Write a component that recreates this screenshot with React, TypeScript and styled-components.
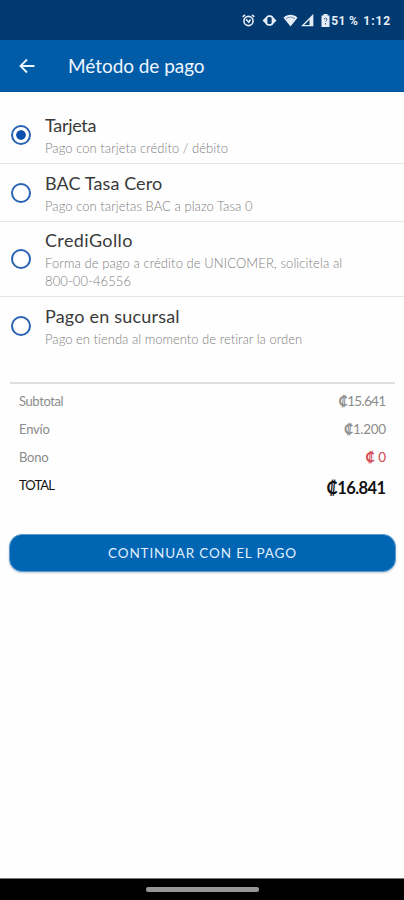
import React, { useState } from "react";
import styled, { createGlobalStyle } from "styled-components";

const GlobalStyle = createGlobalStyle`
  * { box-sizing: border-box; }
  body { margin: 0; background: #fff; }
  button, p, h1, dl, dt, dd { margin: 0; padding: 0; font: inherit; }
`;

const Screen = styled.div`
  display: flex;
  flex-direction: column;
  width: 404px;
  height: 900px;
  overflow: hidden;
  background: #fefefe;
  font-family: Lato, "Open Sans", sans-serif;
`;

const StatusBar = styled.div`
  display: flex;
  align-items: center;
  justify-content: flex-end;
  height: 40px;
  flex: none;
  padding: 1px 13px 0 0;
  background: #003a70;
  color: #e6edf7;
  font: 700 12px/16px Roboto, sans-serif;
  svg { display: block; flex: none; }
`;

const StatusIcon = styled.svg<{ $gap: number }>`
  margin-right: ${(p) => p.$gap}px;
`;

const StatusText = styled.span<{ $spacing: number; $gap?: number }>`
  white-space: nowrap;
  letter-spacing: ${(p) => p.$spacing}px;
  margin-right: ${(p) => p.$gap ?? 0}px;
`;

const Header = styled.header`
  display: flex;
  align-items: center;
  flex: none;
  height: 52px;
  padding-left: 19px;
  background: #005ca7;
  border-bottom: 1px solid #004f9b;
  color: #eff6ff;
`;

const BackButton = styled.button`
  display: flex;
  width: 49px;
  border: 0;
  background: none;
  color: inherit;
`;

const Title = styled.h1`
  font-size: 19px;
  line-height: 24px;
  font-weight: 400;
  letter-spacing: -0.05px;
  white-space: nowrap;
`;

const Options = styled.div`
  padding-top: 14px;
  flex: none;
`;

const Option = styled.div`
  display: flex;
  align-items: center;
  min-height: 58px;
  padding: 6px 30px 6px 11px;
  border-bottom: 1px solid #e6e6e6;
  cursor: pointer;
  &:last-child { border-bottom-color: transparent; }
`;

const Radio = styled.span<{ $checked: boolean }>`
  flex: none;
  width: 20px;
  height: 20px;
  margin-right: 14px;
  border: 2px solid #2a62b4;
  border-radius: 50%;
  background: ${(p) => (p.$checked ? "radial-gradient(circle, #0b50ae 4.4px, #fff 5.2px)" : "#fff")};
`;

const OptionName = styled.p<{ $spacing: number }>`
  font-size: 18px;
  line-height: 24px;
  color: #3a3a3a;
  letter-spacing: ${(p) => p.$spacing}px;
`;

const OptionDetail = styled.p<{ $spacing: number }>`
  margin-top: 2px;
  font-size: 13px;
  font-weight: 300;
  line-height: 18px;
  color: #808080;
  white-space: pre-line;
  letter-spacing: ${(p) => p.$spacing}px;
`;

const Summary = styled.dl`
  flex: none;
  margin: 27px 9px 0 10px;
  padding: 3px 9px 1px;
  border-top: 2px solid #dce0e1;
`;

const Line = styled.div<{ $tone?: "discount" | "total" }>`
  display: flex;
  justify-content: space-between;
  align-items: center;
  height: 28px;
  color: ${(p) => (p.$tone === "total" ? "#111" : "#8c8c8c")};
  dt {
    font-size: 13px;
  }
  dd {
    font-size: ${(p) => (p.$tone === "total" ? 16.5 : 13.5)}px;
    font-weight: ${(p) => (p.$tone === "total" ? 700 : 400)};
    color: ${(p) => (p.$tone === "discount" ? "#cf4650" : "inherit")};
    padding-top: ${(p) => (p.$tone === "total" ? 6 : 0)}px;
  }
`;

const LineText = styled.span<{ $spacing: number }>`
  display: block;
  letter-spacing: ${(p) => p.$spacing}px;
  margin-right: ${(p) => -p.$spacing}px;
`;

const Colon = styled.span`
  font-weight: 700;
`;

const PayButton = styled.button`
  flex: none;
  height: 38px;
  margin: 34px 8px 0 9px !important;
  border: 1px solid #5b9bd2;
  border-radius: 13px;
  background: #0065b3;
  color: #e3efff;
  font-size: 13.5px !important;
  letter-spacing: 0.85px;
  box-shadow: 0 1px 2px rgba(0, 50, 100, 0.25);
`;

const NavBar = styled.div`
  display: flex;
  justify-content: center;
  flex: none;
  height: 22px;
  margin-top: auto;
  padding-top: 8px;
  background: #000;
  border-top: 1px solid #777;
`;

const NavHandle = styled.span`
  width: 113px;
  height: 5px;
  border-radius: 2px;
  background: #969696;
`;

const options = [
  { name: "Tarjeta", detail: "Pago con tarjeta crédito / débito", ns: -0.3, ds: 0.05 },
  { name: "BAC Tasa Cero", detail: "Pago con tarjetas BAC a plazo Tasa 0", ns: 0.1, ds: 0.05 },
  { name: "CrediGollo", detail: "Forma de pago a crédito de UNICOMER, solicitela al\n800-00-46556", ns: 0.4, ds: 0.09 },
  { name: "Pago en sucursal", detail: "Pago en tienda al momento de retirar la orden", ns: 0.2, ds: 0.02 },
];

const lines: { label: string; amount: string; ls: number; as: number; tone?: "discount" | "total" }[] = [
  { label: "Subtotal", amount: "15.641", ls: -0.4, as: -0.7 },
  { label: "Envío", amount: "1.200", ls: -0.2, as: -0.35 },
  { label: "Bono", amount: " 0", ls: -0.2, as: 0, tone: "discount" },
  { label: "TOTAL", amount: "16.841", ls: -0.9, as: -0.6, tone: "total" },
];

export default function App() {
  const [selected, setSelected] = useState(0);
  return (
    <Screen>
      <GlobalStyle />
      <StatusBar>
        <StatusIcon $gap={7} width="13" height="13" viewBox="0 0 13 13" fill="none" stroke="currentColor" strokeWidth="1.6">
          <circle cx="6.5" cy="7" r="4.6" />
          <path d="M.7 2.9 3 .9M12.3 2.9 10 .9M4 5.200l2.800 3L8.500 5.500" />
        </StatusIcon>
        <StatusIcon $gap={6} width="15" height="13" viewBox="0 0 15 13">
          <path d="M.5 6.500 4 3v7zM14.500 6.500 11 3v7z" fill="currentColor" />
          <rect x="4.500" y="2.200" width="6" height="8.600" rx="2.400" fill="none" stroke="currentColor" strokeWidth="1.700" />
        </StatusIcon>
        <StatusIcon $gap={3} width="15" height="13" viewBox="0 0 15 13">
          <path d="M.5 3.7C4.5-.1 10.5-.1 14.500 3.700L7.500 12.500z" fill="currentColor" />
          <path d="M3 4.700c3-2 6-2 9 0" fill="none" stroke="#628ab2" />
        </StatusIcon>
        <StatusIcon $gap={7} width="13" height="13" viewBox="0 0 13 13">
          <path d="M1.500 11.700H11.700V1.500z" fill="none" stroke="currentColor" strokeWidth="1.300" />
          <path d="M8.500 5 12 1v11H8.500z" fill="currentColor" />
        </StatusIcon>
        <StatusIcon $gap={1} width="9" height="13" viewBox="0 0 9 13">
          <path d="M2.500 0h4v1.500H8.500V13H.5V1.500h2z" fill="currentColor" />
          <path d="M3 5q1.500-1.600 3 0 0 1.300-1.500 2.500M4.500 9v1.500" fill="none" stroke="#345f8e" />
        </StatusIcon>
        <StatusText $spacing={0.4} $gap={5}>51 %</StatusText>
        <StatusText $spacing={0.9}>1:12</StatusText>
      </StatusBar>
      <Header>
        <BackButton aria-label="Volver">
          <svg width="16" height="16" viewBox="0 0 16 16" fill="none" stroke="currentColor" strokeWidth="1.8">
            <path d="M15.500 8H2M8 1.500 1.500 8 8 14.500" />
          </svg>
        </BackButton>
        <Title>Método de pago</Title>
      </Header>
      <Options role="radiogroup">
        {options.map((o, i) => (
          <Option key={o.name} role="radio" aria-checked={i === selected} onClick={() => setSelected(i)}>
            <Radio $checked={i === selected} />
            <div>
              <OptionName $spacing={o.ns}>{o.name}</OptionName>
              <OptionDetail $spacing={o.ds}>{o.detail}</OptionDetail>
            </div>
          </Option>
        ))}
      </Options>
      <Summary>
        {lines.map((l) => (
          <Line key={l.label} $tone={l.tone}>
            <dt><LineText $spacing={l.ls}>{l.label}</LineText></dt>
            <dd><LineText $spacing={l.as}><Colon>₡</Colon>{l.amount}</LineText></dd>
          </Line>
        ))}
      </Summary>
      <PayButton>CONTINUAR CON EL PAGO</PayButton>
      <NavBar>
        <NavHandle />
      </NavBar>
    </Screen>
  );
}
